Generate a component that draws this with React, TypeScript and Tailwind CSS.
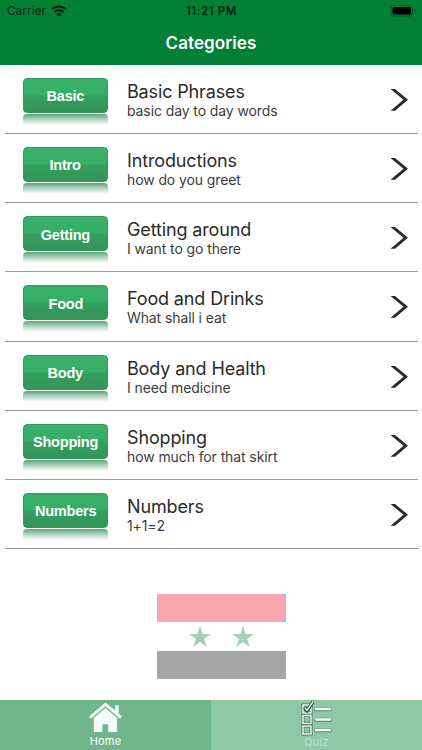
import React from 'react';

interface Category {
  label: string;
  title: string;
  subtitle: string;
}

const categories: Category[] = [
  { label: 'Basic', title: 'Basic Phrases', subtitle: 'basic day to day words' },
  { label: 'Intro', title: 'Introductions', subtitle: 'how do you greet' },
  { label: 'Getting', title: 'Getting around', subtitle: 'I want to go there' },
  { label: 'Food', title: 'Food and Drinks', subtitle: 'What shall i eat' },
  { label: 'Body', title: 'Body and Health', subtitle: 'I need medicine' },
  { label: 'Shopping', title: 'Shopping', subtitle: 'how much for that skirt' },
  { label: 'Numbers', title: 'Numbers', subtitle: '1+1=2' },
];

const StatusBar = () => (
  <div className="grid h-[22px] grid-cols-3 items-center pl-[7px] pr-[6px] text-[11.5px] leading-none text-[#04240f]">
    <div className="flex items-center gap-[5px]">
      <span className="pt-px tracking-[0.2px]">Carrier</span>
      <svg width="16" height="12" viewBox="0 0 16 12" fill="none" stroke="#031c0b" strokeWidth="2">
        <path d="M1 4.3a10 10 0 0 1 14 0" />
        <path d="M3.7 7.1a6.2 6.2 0 0 1 8.6 0" />
        <path d="M8 11.5 5.5 9a3.6 3.6 0 0 1 5 0z" fill="#031c0b" stroke="none" />
      </svg>
    </div>
    <span className="whitespace-nowrap pt-[2px] text-center font-semibold tracking-[0.6px]">11:21 PM</span>
    <svg className="justify-self-end" width="26" height="12" viewBox="0 0 26 12">
      <rect x="1" y="0.5" width="21.5" height="10.5" rx="3" fill="none" stroke="#04551f" />
      <rect x="2.5" y="2" width="18.5" height="7.5" rx="1.6" fill="#000" />
      <path d="M24 4v3.6c1-.4 1.3-1 1.3-1.8S25 4.4 24 4z" fill="#04551f" />
    </svg>
  </div>
);

const CategoryBadge: React.FC<{ label: string }> = ({ label }) => (
  <div className="w-[85px] shrink-0">
    <div className="flex h-[35px] items-center justify-center rounded-[4px] border border-[#34985c] bg-[linear-gradient(#38b068_0%,#35ae66_49%,#33a05d_51%,#349359_100%)] pr-px pt-[2px] font-['Liberation_Sans'] text-[15px] font-bold tracking-[-0.25px] text-white">
      <span className="origin-center scale-x-[0.97]">{label}</span>
    </div>
    <div className="mt-[1px] h-[11px] rounded-t-[4px] bg-[linear-gradient(#57a677,#a9d2ba_45%,#ffffff)]" />
  </div>
);

const CategoryRow: React.FC<{ category: Category }> = ({ category }) => (
  <li className="ml-[5px] mr-[4px] flex h-[69.15px] border-b border-[#999] pl-[18.4px]">
    <div className="pt-[13px]">
      <CategoryBadge label={category.label} />
    </div>
    <div className="ml-[18.6px] flex-1 pt-[16px] text-[#2b2b2b]">
      <div className="text-[18px] leading-[21px] tracking-[-0.14px]">{category.title}</div>
      <div className="text-[14px] leading-[18px] tracking-[-0.1px] text-[#3c3c3c]">{category.subtitle}</div>
    </div>
    <svg className="mr-[10px] mt-[24px]" width="18" height="22" viewBox="0 0 18 22">
      <path d="M0.500 0h4.500L18 10.800 5 21.800H0.500L13.500 10.800z" fill="#2a2a2a" />
    </svg>
  </li>
);

const Star = () => (
  <svg width="22" height="21" viewBox="0 0 22 21">
    <path d="M11 0l2.600 8H22l-6.800 5 2.600 8L11 16.100 4.200 21l2.600-8L0 8h8.400z" fill="#a3d2b8" />
  </svg>
);

const Flag = () => (
  <div className="ml-[157px] mt-[45px] w-[129px]">
    <div className="h-[28.500px] bg-[#f5a6af]" />
    <div className="flex h-[28.500px] items-center justify-center gap-[21px]">
      <Star />
      <Star />
    </div>
    <div className="h-[28.500px] bg-[#a6a6a6]" />
  </div>
);

const HomeIcon = () => (
  <svg width="33" height="31" viewBox="0 0 34 31" fill="#f2fff8">
    <path d="M17 0 0 14.500l2 2.200L17 4l15 12.700 2-2.200-3.500-3.200V3H27v5.300z" />
    <path d="M17 5.800 5 16V30.500h8.800v-8h6v8H29V16z" />
  </svg>
);

const QuizIcon = () => (
  <svg width="31" height="35" viewBox="0 0 31 35" fill="none">
    {[4, 14.5, 25].map(y => (
      <g key={y}>
        <rect x="2" y={y} width="8" height="8" stroke="#4f7561" strokeWidth="3" />
        <rect x="2" y={y} width="8" height="8" stroke="#e9fff3" strokeWidth="1.400" />
        <path d={`M15 ${y + 4.2}h14`} stroke="#587f6a" strokeWidth="4" strokeLinecap="round" />
        <path d={`M15 ${y + 4}h14`} stroke="#f2fff8" strokeWidth="2.600" strokeLinecap="round" />
      </g>
    ))}
    <path d="M3.500 6.500 6 9.500 12 1" stroke="#315342" strokeWidth="3.300" />
    <path d="M3.800 6.800 6 9.200 11.800 1.200" stroke="#e9fff3" strokeWidth="1.300" />
  </svg>
);

export default function App() {
  return (
    <div className="flex h-[750px] w-[422px] flex-col overflow-hidden bg-white font-[Inter,sans-serif]">
      <header className="h-[65px] shrink-0 bg-[#028036]">
        <StatusBar />
        <h1 className="mt-[9px] text-center text-[17px] font-semibold leading-[24px] tracking-[0.1px] text-white">Categories</h1>
      </header>
      <ul className="shrink-0">
        {categories.map(category => (
          <CategoryRow key={category.label} category={category} />
        ))}
      </ul>
      <Flag />
      <nav className="mt-auto grid h-[50px] grid-cols-2 text-[11px] leading-[12px]">
        <div className="flex flex-col items-center bg-[#70b58c] pt-[2px] text-white">
          <HomeIcon />
          <span className="mt-[2px] tracking-[0.2px]">Home</span>
        </div>
        <div className="flex flex-col items-center bg-[#8fc8a7] pt-px text-[#bfe3ce]">
          <QuizIcon />
          <span className="tracking-[0.3px]">Quiz</span>
        </div>
      </nav>
    </div>
  );
}
